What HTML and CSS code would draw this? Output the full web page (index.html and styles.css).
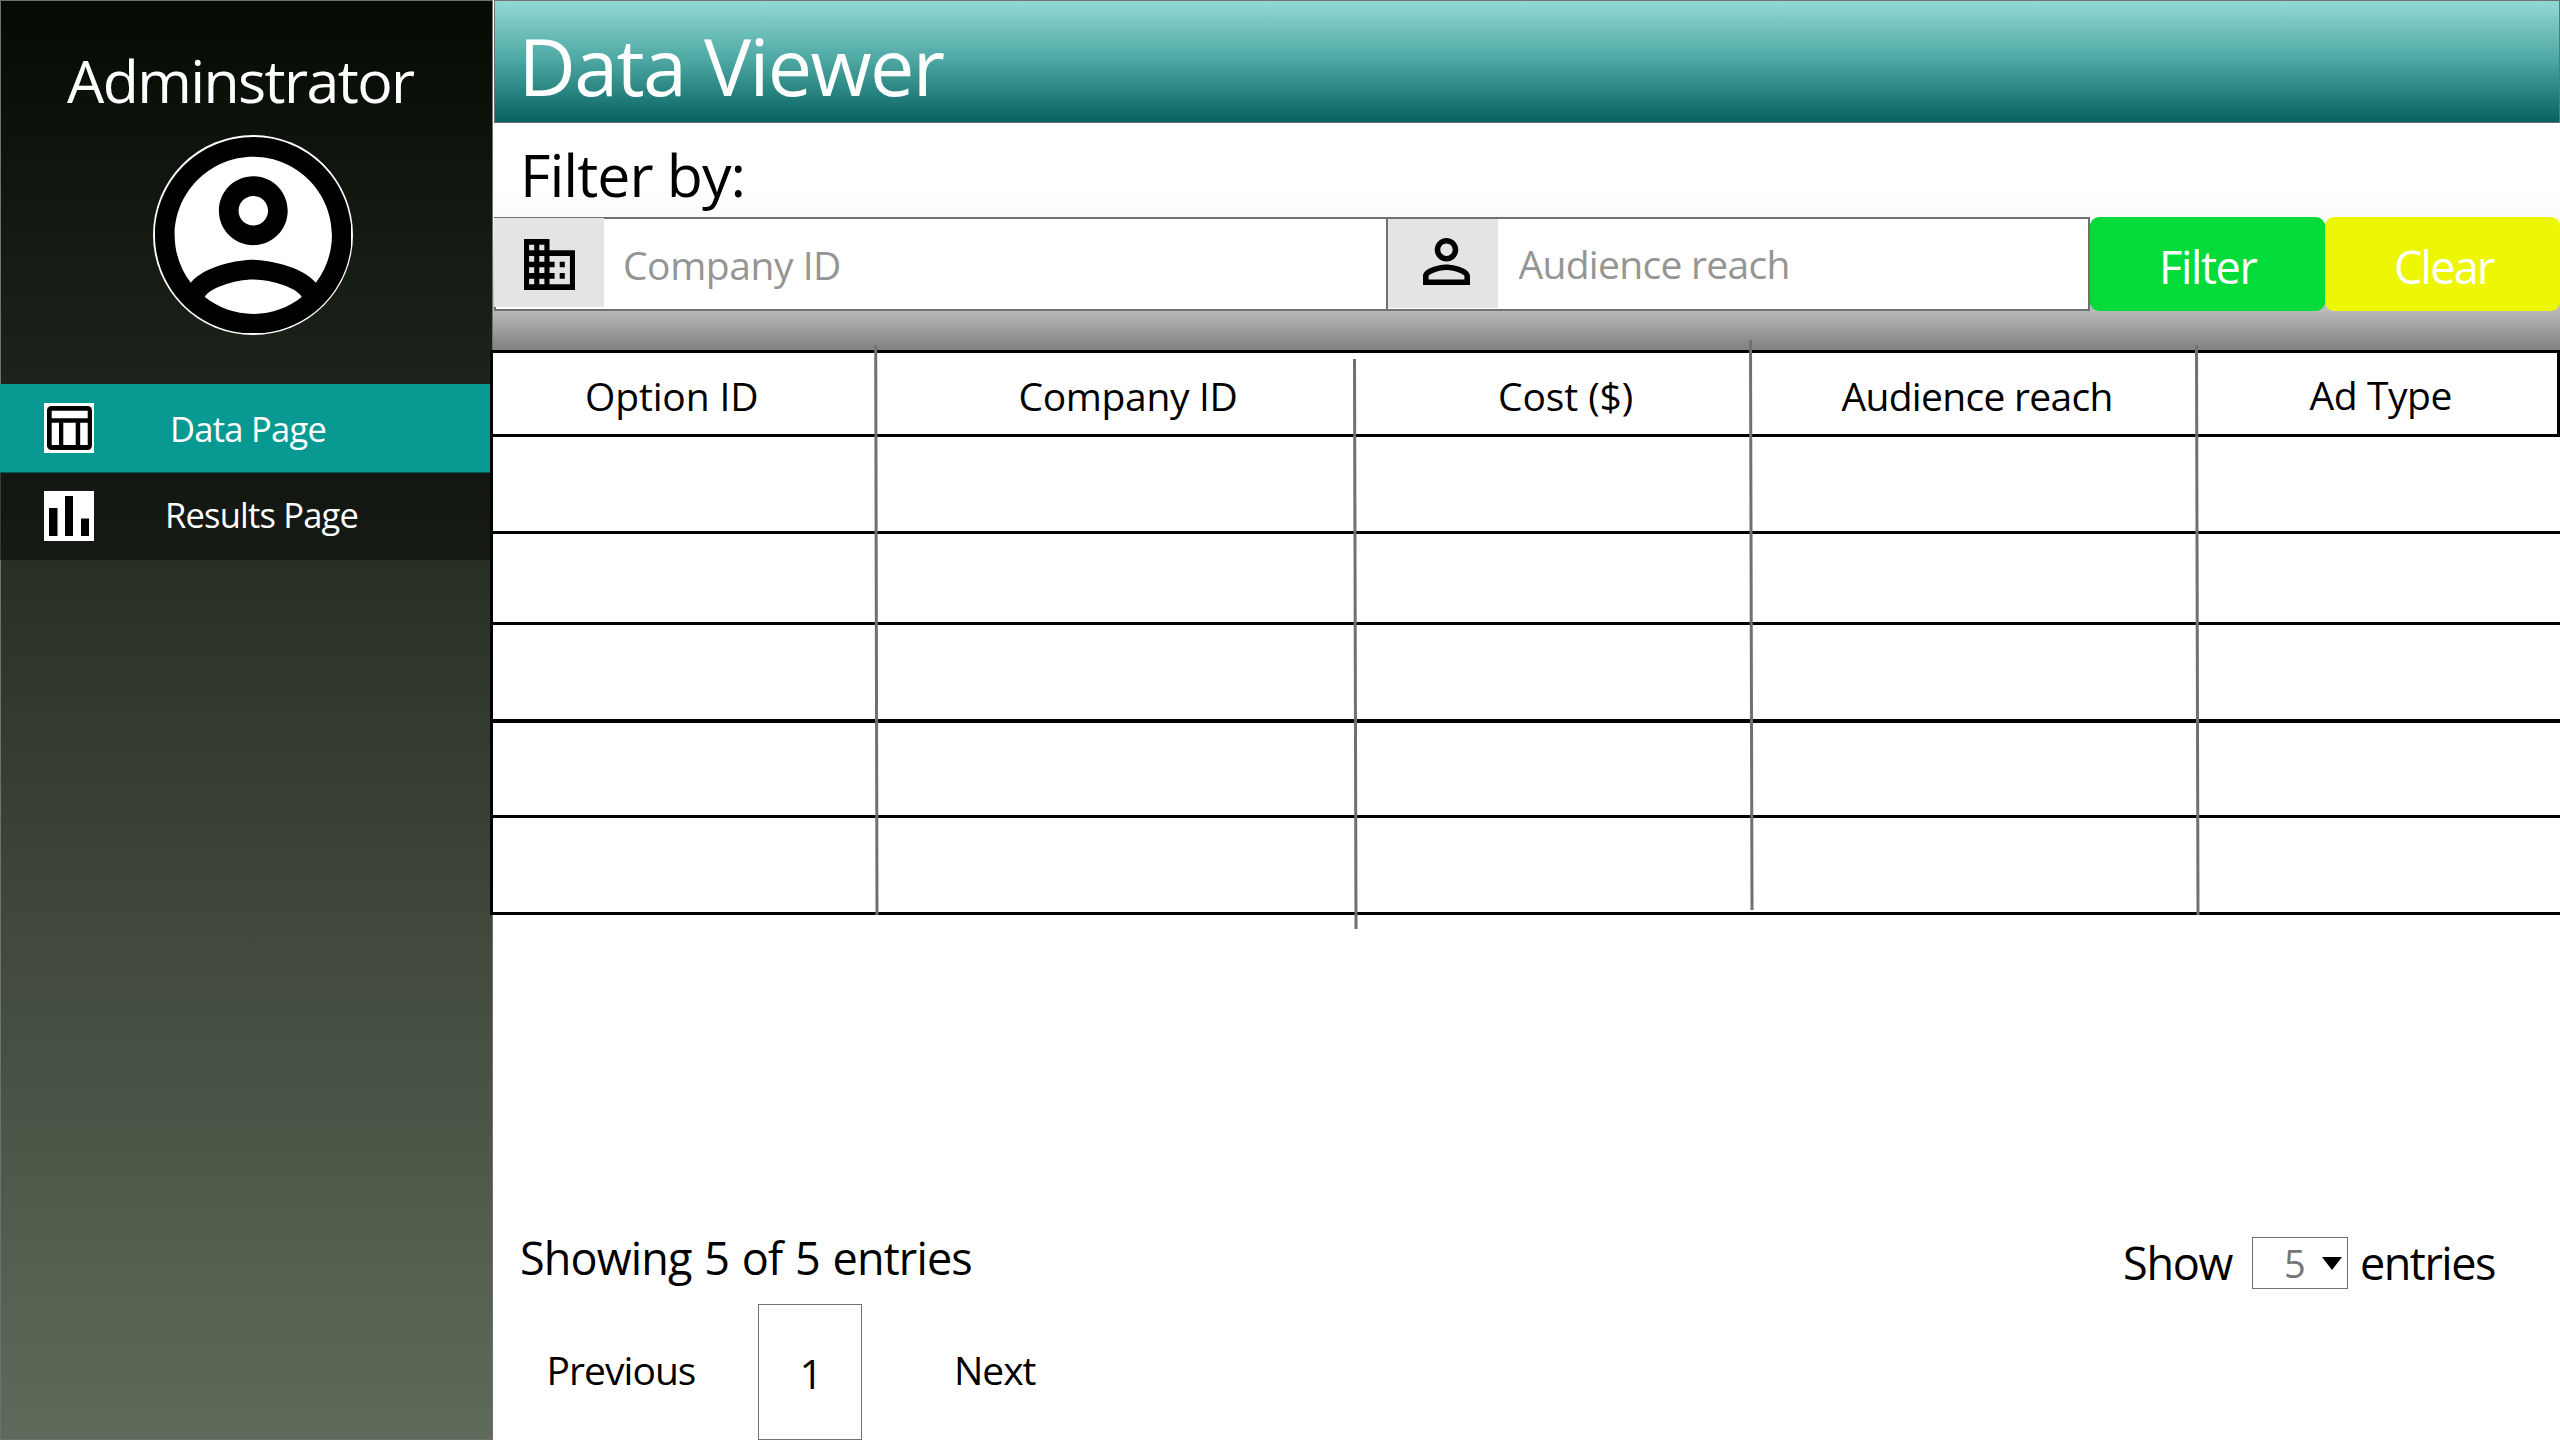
FILE: index.html
```html
<!DOCTYPE html>
<html lang="en">
<head>
<meta charset="utf-8">
<title>Data Viewer</title>
<link rel="stylesheet" href="styles.css">
</head>
<body>
<div class="app">
  <aside class="sidebar">
    <div class="role">Adminstrator</div>
    <div class="avatar">
      <svg class="avatar-icon" viewBox="2 2 20 20"><path d="M12 2C6.48 2 2 6.48 2 12s4.48 10 10 10 10-4.48 10-10S17.52 2 12 2zM7.07 18.28c.43-.9 3.05-1.78 4.93-1.78s4.51.88 4.93 1.78C15.57 19.36 13.86 20 12 20s-3.57-.64-4.93-1.72zm11.29-1.45c-1.43-1.74-4.9-2.33-6.36-2.33s-4.93.59-6.36 2.33C4.62 15.49 4 13.82 4 12c0-4.41 3.59-8 8-8s8 3.59 8 8c0 1.82-.62 3.49-1.64 4.83zM12 6c-1.94 0-3.5 1.56-3.5 3.5S10.06 13 12 13s3.5-1.56 3.5-3.5S13.94 6 12 6zm0 5c-.83 0-1.5-.67-1.5-1.5S11.17 8 12 8s1.5.67 1.5 1.5S12.83 11 12 11z"/></svg>
    </div>
    <nav class="nav">
      <a class="nav-item nav-item-active">
        <svg class="nav-icon" viewBox="0 0 50 50"><rect x="3" y="3" width="45" height="44" rx="4.5"/><path fill="#fff" d="M7.7 7.7h36v7.6h-36zM7.7 19.7H15V42H7.7zM19.3 19.7h12.4V42H19.3zM36.2 19.7h7.5V42h-7.5z"/></svg>
        <span class="nav-label">Data Page</span>
      </a>
      <a class="nav-item nav-item-results">
        <svg class="nav-icon" viewBox="0 0 50 50"><path d="M5 17h8.5v28H5zM21 5h8v40h-8zM37 27.5h8V45h-8z"/></svg>
        <span class="nav-label">Results Page</span>
      </a>
    </nav>
  </aside>

  <main class="main">
    <header class="titlebar"><h1 class="title">Data Viewer</h1></header>
    <section class="filters">
      <h2 class="filters-title">Filter by:</h2>
      <div class="filter-row">
        <label class="field field-company">
          <span class="field-icon"><svg class="icon-company" viewBox="2 3 20 18" preserveAspectRatio="none"><path d="M12 7V3H2v18h20V7H12zM6 19H4v-2h2v2zm0-4H4v-2h2v2zm0-4H4V9h2v2zm0-4H4V5h2v2zm4 12H8v-2h2v2zm0-4H8v-2h2v2zm0-4H8V9h2v2zm0-4H8V5h2v2zm10 12h-8v-2h2v-2h-2v-2h2v-2h-2V9h8v10zm-2-8h-2v2h2v-2zm0 4h-2v2h2v-2z"/></svg></span>
          <input class="field-input" type="text" placeholder="Company ID">
        </label>
        <label class="field field-reach">
          <span class="field-icon"><svg class="icon-person" viewBox="4 4 16 16"><path d="M12 5.9c1.16 0 2.1.94 2.1 2.1s-.94 2.1-2.1 2.1S9.9 9.16 9.9 8s.94-2.1 2.1-2.1m0 9c2.97 0 6.1 1.46 6.1 2.1v1.1H5.9V17c0-.64 3.13-2.1 6.1-2.1M12 4C9.79 4 8 5.79 8 8s1.79 4 4 4 4-1.79 4-4-1.79-4-4-4zm0 9c-2.67 0-8 1.34-8 4v3h16v-3c0-2.66-5.33-4-8-4z"/></svg></span>
          <input class="field-input" type="text" placeholder="Audience reach">
        </label>
        <button class="btn btn-filter" type="button">Filter</button>
        <button class="btn btn-clear" type="button">Clear</button>
      </div>
    </section>

    <section class="table">
      <div class="row row-head">
        <div class="cell cell-option">Option ID</div>
        <div class="cell cell-company">Company ID</div>
        <div class="cell cell-cost">Cost ($)</div>
        <div class="cell cell-reach">Audience reach</div>
        <div class="cell cell-type">Ad Type</div>
      </div>
      <div class="row row-1"></div>
      <div class="row row-2"></div>
      <div class="row row-3"></div>
      <div class="row row-4"></div>
      <div class="row row-5"></div>
      <svg class="dividers" viewBox="490 340 2070 590">
        <path d="M875.7 345L877 915M1354.5 359L1356 929M1750.5 340L1752 910M2196.5 345L2198 915"/>
      </svg>
    </section>

    <footer class="footer">
      <div class="summary">
        <div class="showing">Showing 5 of 5 entries</div>
        <div class="page-size">
          <span class="show">Show</span>
          <span class="select"><span class="select-value">5</span><svg class="caret" viewBox="0 0 20 13"><path d="M0 0h20L10 13z"/></svg></span>
          <span class="entries">entries</span>
        </div>
      </div>
      <div class="pager">
        <a class="previous">Previous</a>
        <a class="page">1</a>
        <a class="next">Next</a>
      </div>
    </footer>
  </main>
</div>
</body>
</html>
```
FILE: styles.css
```css
* { box-sizing: border-box; }

body {
  margin: 0;
  background: #fff;
  color: #000;
  font-family: "Open Sans", "Noto Sans", sans-serif;
  font-size: 39px;
}

.app { display: flex; gap: 1px; width: 2560px; height: 1440px; overflow: hidden; }

/* Sidebar */
.sidebar {
  flex: none;
  width: 493px;
  padding-top: 40px;
  background: linear-gradient(#050a04, #5f6b5a);
  box-shadow: inset 0 0 0 1px #707070;
  color: #fff;
}
.role { padding-left: 67px; font-size: 59px; line-height: 80px; letter-spacing: -1.6px; white-space: nowrap; }
.avatar {
  display: flex;
  align-items: center;
  justify-content: center;
  width: 200px;
  height: 200px;
  margin: 15px 0 49px 153px;
  border-radius: 50%;
  background: #fff;
}
.avatar-icon { width: 196.6px; height: 196.6px; }
.nav { width: 490px; }
.nav-item { display: flex; align-items: center; height: 87px; padding-left: 44px; font-size: 34.5px; background: rgba(4, 4, 4, .5); }
.nav-item-active { height: 89px; background: #079992; border-bottom: 1px solid #0a5753; }
.nav-icon { flex: none; width: 50px; height: 50px; background: #fff; }
.nav-label { padding: 1px 0 0 76px; letter-spacing: -.72px; }
.nav-item-results .nav-icon { margin-top: -1px; }
.nav-item-results .nav-label { padding: 0 0 5px 71px; letter-spacing: -.8px; }

/* Main column */
.main { display: flex; flex-direction: column; flex: 1; min-width: 0; }
.titlebar {
  flex: none;
  height: 123px;
  padding: 25px 0 0 23.5px;
  border: 1px solid #707070;
  background: linear-gradient(#92d9d4, #4ba6a2 50%, #06625e);
}
.title { margin: 0; font-size: 79px; font-weight: 400; line-height: 80px; letter-spacing: -1.65px; color: #fff; }

.filters {
  flex: none;
  height: 227px;
  margin-left: -1px;
  padding-left: 1px;
  background: linear-gradient(#fff 65px, #fbfbfb 94px, #b9b9b9 188px, #808080 227px);
}
.filters-title { margin: 0; height: 94px; padding: 11px 0 0 26px; font-size: 59px; font-weight: 400; line-height: 80px; letter-spacing: -1px; }
.filter-row { display: flex; height: 94px; }
.field { display: flex; align-items: flex-start; border: 2px solid #707070; background: #fff; }
.field-company { width: 892px; border-right: 0; }
.field-reach { width: 704px; }
.field-icon { flex: none; display: flex; align-items: center; justify-content: center; width: 110px; height: 89px; background: #e4e4e4; }
.field-company .field-icon { margin: -1px 0 0 -2px; }
.icon-company { width: 51px; height: 51px; margin: 4px 0 0 1px; }
.icon-person { width: 47px; height: 47px; margin: -4px 0 0 6px; }
.field-input {
  flex: 1;
  min-width: 0;
  height: 90px;
  padding: 0 0 0 19px;
  border: 0;
  background: none;
  font: inherit;
  letter-spacing: -.45px;
}
.field-reach .field-input { padding: 0 0 2px 20.5px; letter-spacing: -.69px; }
.field-input::placeholder { color: #959595; opacity: 1; }
.btn {
  width: 235px;
  padding: 4px 0 0 69px;
  border: 0;
  border-radius: 9px;
  font: inherit;
  font-size: 45px;
  text-align: left;
  color: #fff;
}
.btn-filter { background: #03db3b; letter-spacing: -1.35px; }
.btn-clear { background: #edf603; letter-spacing: -1.74px; }

/* Table */
.table { position: relative; flex: none; margin-left: -4px; border-left: 3px solid #000; background: #fff; }
.row { border-bottom: 3px solid #000; }
.row-head {
  display: grid;
  grid-template-columns: 383px 478px 396px 446px 1fr;
  align-items: center;
  height: 87px;
  padding-top: 4px;
  border-top: 3px solid #000;
  border-right: 3px solid #000;
}
.cell { white-space: nowrap; line-height: 54px; }
.cell-option { padding-left: 92px; letter-spacing: -.15px; }
.cell-company { padding-left: 142.5px; letter-spacing: -.35px; }
.cell-cost { padding-left: 144px; letter-spacing: -.1px; }
.cell-reach { padding-left: 91.5px; letter-spacing: -.69px; }
.cell-type { padding: 0 0 1px 113.5px; letter-spacing: -.42px; }
.row-1 { height: 97px; }
.row-2 { height: 91px; }
.row-3 { height: 98px; border-bottom-width: 4px; }
.row-4 { height: 95px; }
.row-5 { height: 97px; }
/* Column rules run past the table's top and bottom edges */
.dividers { position: absolute; left: -3px; top: -10px; width: 2070px; height: 590px; fill: none; stroke: #707070; stroke-width: 3; }

/* Footer */
.footer { display: flex; flex-direction: column; flex: 1; justify-content: flex-end; }
.summary { display: flex; justify-content: space-between; height: 67px; padding: 0 66px 0 26px; font-size: 45px; line-height: 52px; }
.showing { margin-top: -5px; letter-spacing: -.85px; word-spacing: 1.8px; }
.page-size { display: flex; height: 52px; }
.show { width: 129px; letter-spacing: -1.3px; }
.select { display: flex; align-items: center; justify-content: space-between; width: 96px; padding: 0 5px 0 31px; border: 1px solid #707070; font-size: 38px; color: #777; }
.caret { width: 20px; height: 13px; }
.entries { width: 146px; padding-left: 12px; letter-spacing: -1.5px; white-space: nowrap; }
.pager { display: flex; height: 136px; line-height: 131px; }
.previous { width: 264px; padding-left: 52.5px; letter-spacing: -.95px; }
.page { width: 104px; padding-left: 40.5px; border: 1px solid #707070; font-size: 41px; line-height: 137px; }
.next { padding-left: 92px; letter-spacing: -1.06px; }
```
